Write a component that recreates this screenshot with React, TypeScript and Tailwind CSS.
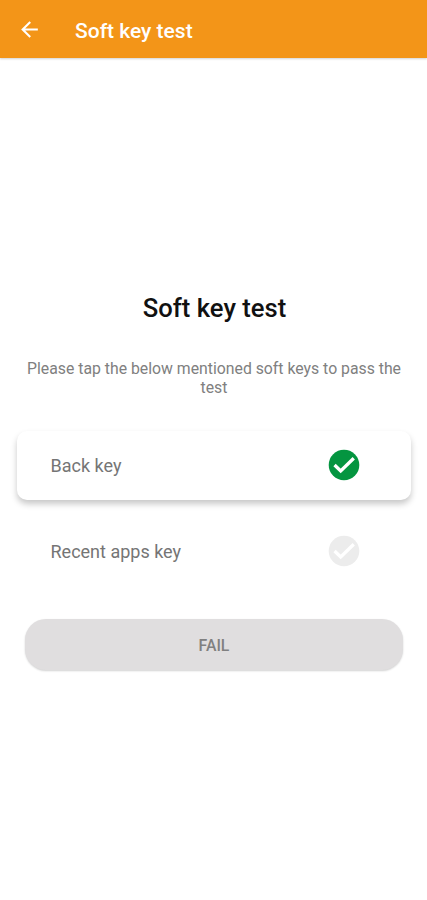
import React from "react";

function Check({ color }: { color: string }) {
  return (
    <svg width="36" height="36" viewBox="0 0 24 24" className="mb-[2px] block shrink-0">
      <circle cx="12" cy="12" r="10.2" fill={color} />
      <path d="M5.7 12l4.1 4 8.7-8.5" fill="none" stroke="white" strokeWidth="2.2" />
    </svg>
  );
}

export default function App() {
  return (
    <div className="flex h-[900px] w-full flex-col overflow-hidden bg-white font-['Roboto',sans-serif]">
      <header className="flex h-[58px] shrink-0 items-center bg-[#f39518] pt-[3px] pl-[17px] text-white shadow-[0_1px_2px_rgba(0,0,0,0.18)]">
        <svg width="25" height="25" viewBox="0 0 24 24" fill="currentColor" className="mb-[2px] block">
          <path d="M20 11H7.83l5.59-5.59L12 4l-8 8 8 8 1.41-1.41L7.83 13H20v-2z" />
        </svg>
        <span className="ml-[33px] text-[21px] font-medium leading-6">Soft key test</span>
      </header>
      <main className="flex flex-col items-center">
        <h1 className="mt-[234px] pl-[2px] text-[25.6px] font-medium leading-8 text-[#111]">Soft key test</h1>
        <p className="mt-[35px] w-[390px] pl-px text-center text-[15.8px] leading-[19px] text-[#808080]">
          Please tap the below mentioned soft keys to pass the<br />test
        </p>
        <div className="mt-[34px] flex h-[69px] w-[394px] items-center justify-between rounded-[10px] bg-white pr-[49px] pl-[34px] shadow-[0_4px_6px_rgba(0,0,0,0.22)]">
          <span className="text-[18px] text-[#757575]">Back key</span>
          <Check color="#049540" />
        </div>
        <div className="mt-[17px] flex h-[69px] w-[394px] items-center justify-between pr-[49px] pl-[34px]">
          <span className="text-[18px] text-[#757575]">Recent apps key</span>
          <Check color="#ececec" />
        </div>
        <button className="mt-[33px] ml-px h-[51px] w-[378px] rounded-[21px] bg-[#e0dedf] pt-[2px] text-[15.8px] font-medium text-[#808080] shadow-[0_1px_2px_rgba(0,0,0,0.18)]">FAIL</button>
      </main>
    </div>
  );
}
